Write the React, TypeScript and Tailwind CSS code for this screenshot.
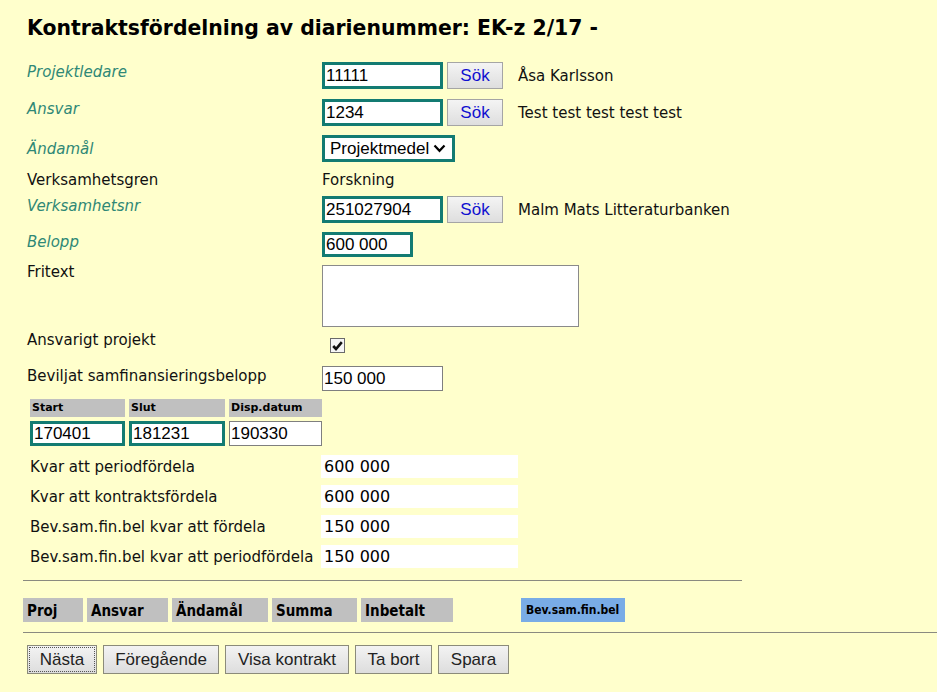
import React from 'react';

const TEAL = 'border-[3px] border-[#137b72]';

function Field({ value, w, teal = true, h = 'h-[27px]' }: { value: string; w: string; teal?: boolean; h?: string }) {
  return (
    <input
      readOnly
      value={value}
      className={`${w} ${h} ${teal ? TEAL : 'border border-[#7f7f7f]'} bg-white px-[1px] font-['Liberation_Sans',Arial,sans-serif] text-[17px] text-black outline-none`}
    />
  );
}

function SokButton() {
  return (
    <button className="ml-[4px] h-[27px] w-[56px] border border-[#a5a5a5] bg-gradient-to-b from-[#f4f4f4] to-[#dedede] font-['Liberation_Sans',Arial,sans-serif] text-[17px] text-[#1010d0]">
      Sök
    </button>
  );
}

function Label({ text, italic = false }: { text: string; italic?: boolean }) {
  return (
    <div className={`w-[295px] shrink-0 leading-[20px] ${italic ? 'italic text-[#2f8876]' : 'text-[#111]'}`}>{text}</div>
  );
}

const kvar = [
  ['Kvar att periodfördela', '600 000'],
  ['Kvar att kontraktsfördela', '600 000'],
  ['Bev.sam.fin.bel kvar att fördela', '150 000'],
  ['Bev.sam.fin.bel kvar att periodfördela', '150 000'],
];

const cols = [
  ['Proj', 'w-[60px]'],
  ['Ansvar', 'w-[81px]'],
  ['Ändamål', 'w-[96px]'],
  ['Summa', 'w-[85px]'],
  ['Inbetalt', 'w-[92px]'],
];

const buttons = [
  ['Nästa', 'w-[70px]'],
  ['Föregående', 'w-[116px]'],
  ['Visa kontrakt', 'w-[124px]'],
  ['Ta bort', 'w-[77px]'],
  ['Spara', 'w-[71px]'],
];

export default function App() {
  return (
    <div className="min-h-screen bg-[#ffffcc] font-['DejaVu_Sans',Verdana,sans-serif] text-[15px] text-[#111]">
      <div className="pl-[27px] pt-[16px]">
        <h1 className="text-[20.4px] font-bold leading-[24px] text-black">Kontraktsfördelning av diarienummer: EK-z 2/17 -</h1>

        <div className="mt-[22px] flex h-[27px] items-start">
          <Label text="Projektledare" italic />
          <Field value="11111" w="w-[121px]" />
          <SokButton />
          <span className="ml-[15px] mt-[2px] self-center">Åsa Karlsson</span>
        </div>

        <div className="mt-[10px] flex h-[27px] items-start">
          <Label text="Ansvar" italic />
          <Field value="1234" w="w-[121px]" />
          <SokButton />
          <span className="ml-[15px] mt-[2px] self-center">Test test test test test</span>
        </div>

        <div className="mt-[9px] flex h-[27px] items-start">
          <div className="w-[295px] shrink-0 pt-[4px] leading-[20px] italic text-[#2f8876]">Ändamål</div>
          <div className={`${TEAL} flex h-[27px] w-[133px] items-center justify-between bg-white pl-[5px] pr-[6px] font-['Liberation_Sans',Arial,sans-serif] text-[17px] text-black`}>
            <span>Projektmedel</span>
            <svg width="13" height="9" viewBox="0 0 13 9">
              <path d="M1.5 1.5 L6.5 6.8 L11.5 1.5" fill="none" stroke="#000" strokeWidth="2.2" />
            </svg>
          </div>
        </div>

        <div className="mt-[8px] flex h-[20px] items-start">
          <Label text="Verksamhetsgren" />
          <span className="leading-[20px]">Forskning</span>
        </div>

        <div className="mt-[6px] flex h-[27px] items-start">
          <Label text="Verksamhetsnr" italic />
          <Field value="251027904" w="w-[121px]" />
          <SokButton />
          <span className="ml-[15px] mt-[2px] self-center">Malm Mats Litteraturbanken</span>
        </div>

        <div className="mt-[9px] flex h-[25px] items-start">
          <Label text="Belopp" italic />
          <Field value="600 000" w="w-[91px]" h="h-[25px]" />
        </div>

        <div className="mt-[8px] flex items-start">
          <div className="-mt-[3px] w-[295px] shrink-0 leading-[20px]">Fritext</div>
          <textarea readOnly className="h-[62px] w-[257px] resize-none border border-[#8a8a8a] bg-white outline-none" />
        </div>

        <div className="mt-[3px] flex h-[26px] items-start">
          <Label text="Ansvarigt projekt" />
          <div className="ml-[8px] mt-[8px] flex h-[15px] w-[15px] items-center justify-center border border-[#6a6a6a] bg-[#f6f6f6]">
            <svg width="11" height="10" viewBox="0 0 11 10">
              <path d="M1.2 5 L4 8 L9.8 1.2" fill="none" stroke="#111" strokeWidth="2.6" />
            </svg>
          </div>
        </div>

        <div className="mt-[10px] flex h-[25px] items-start">
          <Label text="Beviljat samfinansieringsbelopp" />
          <Field value="150 000" w="w-[121px]" teal={false} h="h-[25px]" />
        </div>

        <div className="ml-[3px] mt-[8px] flex gap-[4px]">
          {[
            ['Start', 'w-[95px]', '170401', true],
            ['Slut', 'w-[96px]', '181231', true],
            ['Disp.datum', 'w-[93px]', '190330', false],
          ].map(([h, w, v, t]) => (
            <div key={h as string} className="flex flex-col gap-[4px]">
              <div className={`${w} h-[18px] bg-[#c0c0c0] pl-[2px] text-[11px] font-bold leading-[18px] text-black`}>{h}</div>
              <Field value={v as string} w={w as string} teal={t as boolean} h="h-[25px]" />
            </div>
          ))}
        </div>

        <div className="mt-[9px] flex flex-col gap-[7px]">
          {kvar.map(([l, v]) => (
            <div key={l} className="flex h-[23px] items-center">
              <div className="w-[294px] shrink-0 pl-[3px] leading-[20px]">{l}</div>
              <div className="h-[23px] w-[197px] bg-white pl-[3px] text-[16px] leading-[23px] text-black">{v}</div>
            </div>
          ))}
        </div>
      </div>

      <div className="ml-[23px] mt-[12px] w-[719px] border-t border-[#8a8a80]" />

      <div className="ml-[23px] mt-[17px] flex h-[24px]">
        {cols.map(([t, w]) => (
          <div key={t} className={`${w} mr-[4px] bg-[#c0c0c0] pl-[4px] font-['DejaVu_Sans_Condensed','DejaVu_Sans',sans-serif] text-[15px] font-bold leading-[26px] text-black`}>
            {t}
          </div>
        ))}
        <div className="mr-[4px] w-[60px]" />
        <div className="w-[104px] bg-[#79ace6] pl-[5px] font-['DejaVu_Sans_Condensed','DejaVu_Sans',sans-serif] text-[12px] font-bold leading-[24px] text-black">
          Bev.sam.fin.bel
        </div>
      </div>

      <div className="ml-[23px] mt-[10px] border-t border-[#8a8a80]" />

      <div className="ml-[27px] mt-[12px] flex gap-[6px] font-['Liberation_Sans',Arial,sans-serif] text-[17px] text-[#222]">
        {buttons.map(([b, w], i) => (
          <button key={b} className={`${w} h-[29px] border border-[#8b8b7a] bg-gradient-to-b from-[#f3f3f3] to-[#dddddd] p-[2px]`}>
            <span className={`flex h-full items-center justify-center ${i === 0 ? 'outline outline-1 outline-dotted outline-[#555]' : ''}`}>{b}</span>
          </button>
        ))}
      </div>
    </div>
  );
}
